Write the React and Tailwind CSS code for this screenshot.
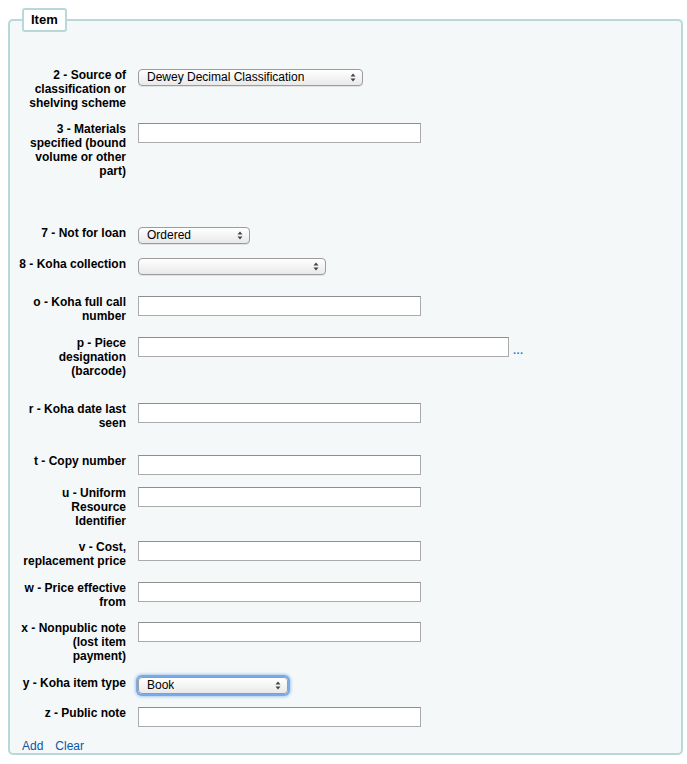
import React from "react"

// Koha item editor – subfield rows
const rows = [
    { lines: ["2 - Source of", "classification or", "shelving scheme"], kind: "select", value: "Dewey Decimal Classification", w: "w-[225px]", mt: "mt-[36px]" },
    { lines: ["3 - Materials", "specified (bound", "volume or other", "part)"], kind: "text", mt: "mt-[12px]" },
    { lines: ["7 - Not for loan"], kind: "select", value: "Ordered", w: "w-[112px]", mt: "mt-[48px]" },
    { lines: ["8 - Koha collection"], kind: "select", value: "", w: "w-[188px]", mt: "mt-[13px]" },
    { lines: ["o - Koha full call", "number"], kind: "text", mt: "mt-[20px]" },
    { lines: ["p - Piece", "designation", "(barcode)"], kind: "barcode", mt: "mt-[13px]" },
    { lines: ["r - Koha date last", "seen"], kind: "text", mt: "mt-[24px]" },
    { lines: ["t - Copy number"], kind: "text", mt: "mt-[24px]" },
    { lines: ["u - Uniform", "Resource", "Identifier"], kind: "text", mt: "mt-[11px]" },
    { lines: ["v - Cost,", "replacement price"], kind: "text", mt: "mt-[12px]" },
    { lines: ["w - Price effective", "from"], kind: "text", mt: "mt-[13px]" },
    { lines: ["x - Nonpublic note", "(lost item", "payment)"], kind: "text", mt: "mt-[12px]" },
    { lines: ["y - Koha item type"], kind: "select", value: "Book", w: "w-[150px]", focused: true, mt: "mt-[13px]" },
    { lines: ["z - Public note"], kind: "text", mt: "mt-[12px]" },
]

function Arrows() {
    return (
        <svg width="6" height="9" viewBox="0 0 6 9" className="shrink-0">
            <path d="M3 0.5 L5.5 3.5 L0.5 3.5 Z" fill="#444" />
            <path d="M3 8.5 L5.5 5.5 L0.5 5.5 Z" fill="#444" />
        </svg>
    )
}

function FakeSelect({ value, w, focused }) {
    return (
        <div
            className={`${w} h-[17px] mt-[1px] flex items-center justify-between pl-[8px] pr-[6px] rounded-[4px] border border-[#9c9c9c] bg-gradient-to-b from-white to-[#e9e9e9] text-[12px] leading-[15px] text-black ${focused ? "shadow-[0_0_0_2px_#7aaae3,0_0_3px_3px_#a9c9ef]" : "shadow-[0_1px_0_rgba(0,0,0,0.08)]"}`}
        >
            <span className="truncate">{value}</span>
            <Arrows />
        </div>
    )
}

function TextInput({ w = "w-[283px]" }) {
    return (
        <input
            type="text"
            className={`block ${w} h-[20px] mt-[1px] bg-white border border-[#ababab] border-t-[#8e8e8e] outline-none text-[12px] px-[2px]`}
        />
    )
}

function Control({ row }) {
    if (row.kind === "select") return <FakeSelect value={row.value} w={row.w} focused={row.focused} />
    if (row.kind === "barcode") {
        return (
            <div className="flex items-end">
                <TextInput w="w-[371px]" />
                <a href="#" className="ml-[4px] mb-[2px] text-[11px] leading-[10px] font-bold text-[#2a78cc] tracking-[0.5px]">...</a>
            </div>
        )
    }
    return <TextInput />
}

export default function App() {
    return (
        <div className="min-h-screen bg-white pt-[8px] pl-[8px] font-['Liberation_Sans',Arial,sans-serif]">
            <fieldset className="w-[675px] border-2 border-[#b8d8d9] rounded-[5px] bg-[#f4f8f9] p-0 m-0">
                <legend className="ml-[12px] px-[7px] py-[2px] border-2 border-[#b8d8d9] rounded-[3px] bg-white text-[13px] leading-[16px] font-bold text-black">
                    Item
                </legend>

                {rows.map((row, i) => (
                    <div key={i} className={`flex items-start pl-[8px] ${row.mt}`}>
                        <label className="w-[108px] shrink-0 text-right text-[12px] leading-[14px] font-bold text-black whitespace-nowrap">
                            {row.lines.map((line, j) => (
                                <React.Fragment key={j}>
                                    {j > 0 && <br />}
                                    {line}
                                </React.Fragment>
                            ))}
                        </label>
                        <div className="ml-[12px]">
                            <Control row={row} />
                        </div>
                    </div>
                ))}

                <div className="flex gap-[12px] pl-[12px] mt-[12px] text-[12px] leading-[14px]">
                    <a href="#" className="text-[#0b55a3]">Add</a>
                    <a href="#" className="text-[#0b55a3]">Clear</a>
                </div>
            </fieldset>
        </div>
    )
}
